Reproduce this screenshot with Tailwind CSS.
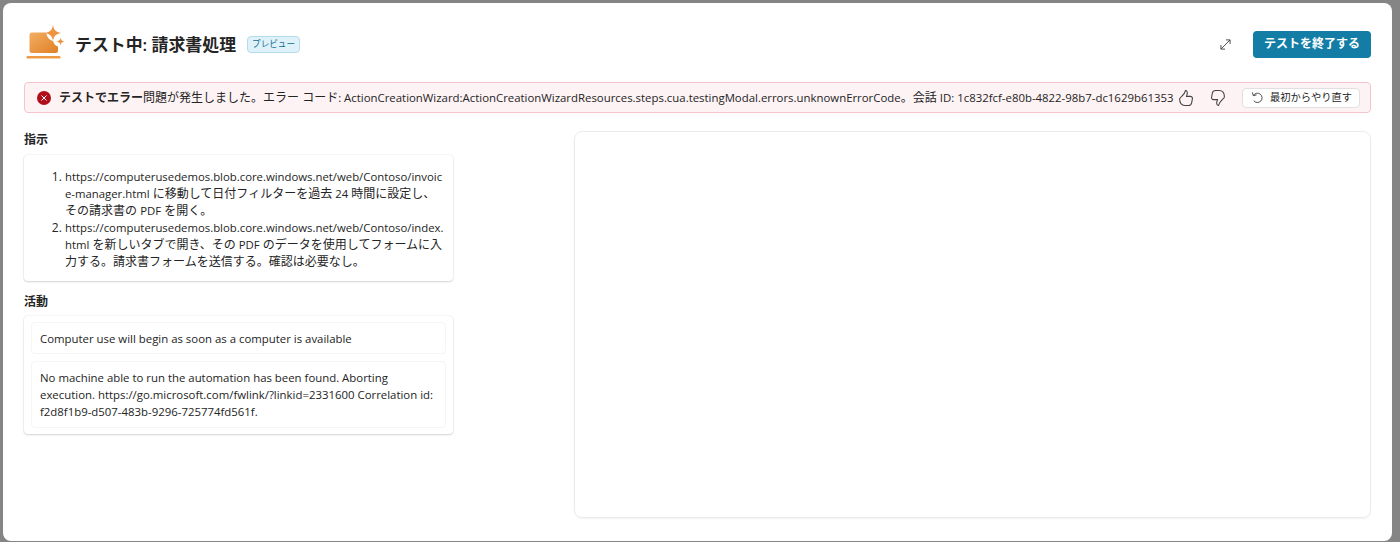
<!DOCTYPE html>
<html lang="ja">
<head>
    <meta charset="UTF-8">
    <title>テスト中: 請求書処理</title>
    <script src="https://cdn.jsdelivr.net/npm/@tailwindcss/browser@4"></script>
</head>
<body class="bg-[#858585] overflow-hidden font-['Open_Sans','Noto_Sans_CJK_JP',sans-serif] text-[#242424]">
    <div class="h-[542px] pl-[3px] pr-[8px] pt-[3px] pb-px">
        <!-- Modal -->
        <div class="h-full bg-white rounded-[8px] pl-[21px] pr-[21px] flex flex-col">
            <!-- Header -->
            <div class="flex items-center h-[56px] mt-[13px] shrink-0">
                <svg class="w-[40px] h-[36px] ml-[2px] mr-[9px] -mt-[2px]" viewBox="0 0 40 36">
                    <defs>
                        <linearGradient id="lap" x1="0" y1="0" x2="1" y2="1">
                            <stop offset="0" stop-color="#f2ae63"/>
                            <stop offset="1" stop-color="#e07f25"/>
                        </linearGradient>
                    </defs>
                    <path d="M3.500 10a2.500 2.500 0 0 1 2.500-2.500h14c1 4 3 7.500 7 8.500 1 3 2.500 5 5 5.500v4a2.500 2.500 0 0 1-2.500 2.500H6a2.500 2.500 0 0 1-2.500-2.500z" fill="url(#lap)"/>
                    <rect x="0.500" y="31" width="34" height="2.400" rx="1.200" fill="#ee9a45"/>
                    <path d="M27 0c.9 5 2.700 6.900 8 8-5.300 1.100-7.100 3-8 8-.9-5-2.700-6.900-8-8 5.300-1.100 7.100-3 8-8z" fill="#ed9440"/>
                    <path d="M34.500 12.500c.4 2.600 1.400 3.600 4 4-2.600.4-3.600 1.400-4 4-.4-2.600-1.400-3.600-4-4 2.600-.4 3.600-1.400 4-4z" fill="#ed9440"/>
                </svg>
                <h1 class="text-[16.9px] font-semibold mt-[2px]">テスト中: 請求書処理</h1>
                <span class="ml-[11px] h-[17px] w-[53px] flex items-center justify-center rounded-[4px] bg-[#e0f2f9] border border-[#b4dcec] text-[8.600px] text-[#0f6c92] whitespace-nowrap">プレビュー</span>
                <svg class="ml-auto w-[11px] h-[11px] text-[#424242]" viewBox="0 0 12 12" fill="none" stroke="currentColor" stroke-width="1">
                    <path d="M1 11 11 1M6.500 1H11v4.500M1 6.500V11h4.500"/>
                </svg>
                <button class="ml-[22px] w-[118px] h-[27px] rounded-[4px] bg-[#147da6] text-white text-[12px] font-semibold">テストを終了する</button>
            </div>

            <!-- Error bar -->
            <div class="flex items-center h-[31px] mt-[10px] shrink-0 bg-[#fdf3f4] border border-[#f4c6cb] rounded-[4px] pl-[12px] pr-[10px] text-[12px] whitespace-nowrap">
                <span class="w-[14px] h-[14px] rounded-full bg-[#b10e1c] flex items-center justify-center mr-[8px] shrink-0">
                    <svg class="w-[6px] h-[6px]" viewBox="0 0 6 6" stroke="#fff" stroke-width="1"><path d="M.5.500l5 5M5.500.500l-5 5"/></svg>
                </span>
                <span class="font-semibold">テストでエラー</span><span>問題が発生しました。エラー コード<span class="text-[11.4px]">: ActionCreationWizard:ActionCreationWizardResources.steps.cua.testingModal.errors.unknownErrorCode</span>。会話 <span class="text-[11.4px]">ID: 1c832fcf-e80b-4822-98b7-dc1629b61353</span></span>
                <svg class="ml-auto w-[14px] h-[16px] text-[#424242] shrink-0" viewBox="1.500 0.500 13 15" fill="none" stroke="currentColor" stroke-width="1">
                    <path d="M2 9c0-1 .8-1.500 2-2.500 1.500-1.500 3-3 3.500-5.500 1.500 0 2 1.500 1.500 3.500L8.500 6.500h3.500c1.500 0 2.200 1 2 2.200l-.7 3.800c-.3 1.500-1.300 2.500-3 2.500H7c-3 0-5-2-5-6.500z"/>
                </svg>
                <svg class="ml-[18px] w-[14px] h-[16px] text-[#424242] shrink-0" viewBox="1.500 0.500 13 15" fill="none" stroke="currentColor" stroke-width="1">
                    <path d="M14 7c0 1-.8 1.500-2 2.500-1.500 1.500-3 3-3.500 5.500-1.500 0-2-1.500-1.500-3.500l.5-2H4c-1.500 0-2.200-1-2-2.200l.7-3.800C3 2 4 1 5.700 1H9c3 0 5 2 5 6z"/>
                </svg>
                <button class="ml-[17px] w-[118px] h-[20px] shrink-0 flex items-center pl-[8px] bg-white border border-[#e0e0e0] rounded-[4px] text-[10.250px]">
                    <svg class="w-[13px] h-[13px] mr-[6px] text-[#424242]" viewBox="0 0 14 14" fill="none" stroke="currentColor" stroke-width="1">
                        <path d="M1.500 1.500 2.500 5l3.500-.8M2.500 5A5 5 0 1 1 3 10.500"/>
                    </svg>
                    最初からやり直す
                </button>
            </div>

            <!-- Body -->
            <div class="flex flex-1 mt-[18px] mb-[23px] min-h-0">
                <div class="w-[429px] shrink-0 text-[12px]">
                    <h2 class="font-semibold leading-[18px]">指示</h2>
                    <div class="mt-[6px] h-[126px] bg-white rounded-[4px] shadow-[0_0_2px_rgba(0,0,0,0.12),0_1px_2px_rgba(0,0,0,0.14)] pl-[41px] pr-[9.500px] pt-[13px] leading-[17px]">
                        <ol class="list-decimal">
                            <li class="break-all"><span class="text-[11.35px]">https://computerusedemos.blob.core.windows.net/web/Contoso/invoice-manager.html</span> に移動して日付フィルターを過去 <span class="text-[11.35px]">24</span> 時間に設定し、その請求書の <span class="text-[11.35px]">PDF</span> を開く。</li>
                            <li class="break-all"><span class="text-[11.35px]">https://computerusedemos.blob.core.windows.net/web/Contoso/index.html</span> を新しいタブで開き、その <span class="text-[11.35px]">PDF</span> のデータを使用してフォームに入力する。請求書フォームを送信する。確認は必要なし。</li>
                        </ol>
                    </div>
                    <h2 class="mt-[12px] font-semibold leading-[18px]">活動</h2>
                    <div class="mt-[5px] bg-white rounded-[4px] shadow-[0_0_2px_rgba(0,0,0,0.12),0_1px_2px_rgba(0,0,0,0.14)] px-[7px] pt-[6px] pb-[6px] flex flex-col gap-[7px] text-[11.4px] leading-[17px]">
                        <div class="border border-[#f5f5f5] rounded-[4px] px-[8px] pt-[7px] pb-[6px]">Computer use will begin as soon as a computer is available</div>
                        <div class="border border-[#f5f5f5] rounded-[4px] px-[8px] pt-[7px] pb-[7px]">No machine able to run the automation has been found. Aborting execution. https://go.microsoft.com/fwlink/?linkid=2331600 Correlation id: f2d8f1b9-d507-483b-9296-725774fd561f.</div>
                    </div>
                </div>
                <!-- Browser preview -->
                <div class="ml-[121px] flex-1 border border-[#ebebeb] rounded-[8px] shadow-[0_1px_2px_rgba(0,0,0,0.05)]"></div>
            </div>
        </div>
    </div>
</body>
</html>
